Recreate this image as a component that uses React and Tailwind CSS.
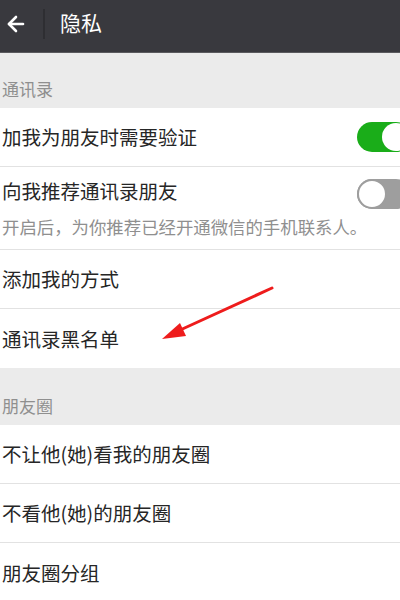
import { ArrowLeft } from 'lucide-react';

function Toggle({ on }) {
  return (
    <div className="w-[43px] h-[30px] overflow-hidden shrink-0">
      {on ? (
        <div className="w-[54px] h-[30px] rounded-full bg-[#1aad19] flex items-center justify-end pr-[1px]">
          <div className="w-[28px] h-[28px] rounded-full bg-white" />
        </div>
      ) : (
        <div className="w-[54px] h-[30px] rounded-full bg-[#9e9e9e] flex items-center">
          <div className="w-[30px] h-[30px] rounded-full bg-white border-[2px] border-[#9e9e9e]" />
        </div>
      )}
    </div>
  );
}

function Row({ children, right, last }) {
  return (
    <div className={`h-[59px] flex items-center justify-between pl-[2px] bg-white ${last ? '' : 'border-b border-[#e2e2e2]'}`}>
      <span className="text-[19.5px] text-[#262626]">{children}</span>
      {right}
    </div>
  );
}

function Label({ children, h }) {
  return (
    <div className={`${h} flex items-end pl-[2px] pb-[7px] text-[17px] text-[#8f8f8f]`}>{children}</div>
  );
}

export default function App() {
  return (
    <div
      className="relative w-[400px] h-[600px] overflow-hidden bg-[#ebebeb]"
      style={{ fontFamily: '"Noto Sans CJK SC", "Noto Sans", sans-serif' }}
    >
      <div className="h-[53px] bg-[#39393e] border-b border-[#5a5a5e] flex items-center">
        <div className="w-[43px] flex justify-center pr-[13px] pl-[2px]">
          <ArrowLeft size={24} strokeWidth={2.6} color="#fff" className="-mt-[4px]" />
        </div>
        <div className="w-[2px] h-[30px] bg-[#2e2e32] -mt-[4px]" />
        <span className="ml-[15px] text-[21px] text-white -mt-[6px]">隐私</span>
      </div>

      <Label h="h-[55px]">通讯录</Label>
      <div className="bg-white">
        <Row right={<Toggle on />}>加我为朋友时需要验证</Row>
        <div className="border-b border-[#e2e2e2]">
          <div className="h-[47px] flex items-center justify-between pl-[2px] pt-[6px]">
            <span className="text-[19.5px] text-[#262626] -mt-[5px]">向我推荐通讯录朋友</span>
            <Toggle />
          </div>
          <div className="h-[35px] pl-[2px] text-[17.4px] text-[#8f8f8f] flex items-start">
            开启后，为你推荐已经开通微信的手机联系人。
          </div>
        </div>
        <Row>添加我的方式</Row>
        <Row last>通讯录黑名单</Row>
      </div>

      <Label h="h-[57px]">朋友圈</Label>
      <div className="bg-white">
        <Row>不让他(她)看我的朋友圈</Row>
        <Row>不看他(她)的朋友圈</Row>
        <Row last>朋友圈分组</Row>
      </div>

      <svg className="absolute left-0 top-0" width="400" height="600" viewBox="0 0 400 600">
        <line x1="272" y1="288" x2="178" y2="331" stroke="#ee1c1c" strokeWidth="3" strokeLinecap="round" />
        <polygon points="162,339 180,323 186,336" fill="#ee1c1c" />
      </svg>
    </div>
  );
}
